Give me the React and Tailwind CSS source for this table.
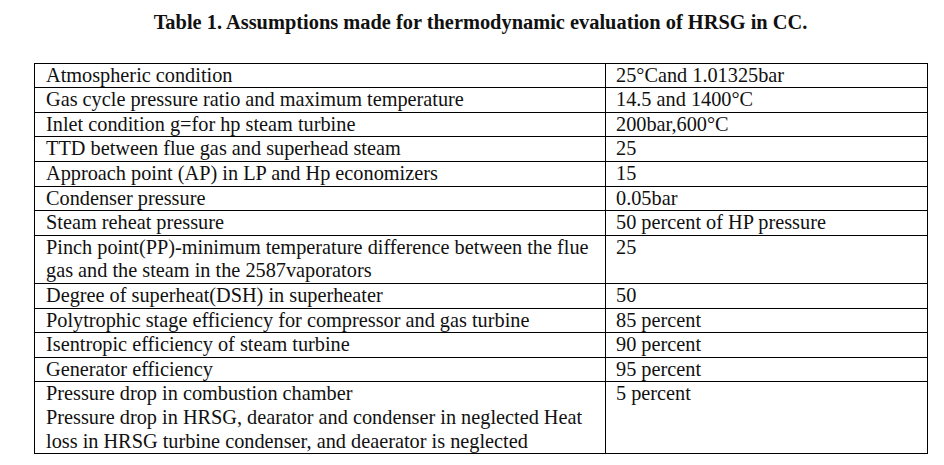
import React from 'react';

const rows = [
  [['Atmospheric condition'], '25°Cand 1.01325bar'],
  [['Gas cycle pressure ratio and maximum temperature'], '14.5 and 1400°C'],
  [['Inlet condition g=for hp steam turbine'], '200bar,600°C'],
  [['TTD between flue gas and superhead steam'], '25'],
  [['Approach point (AP) in LP and Hp economizers'], '15'],
  [['Condenser pressure'], '0.05bar'],
  [['Steam reheat pressure'], '50 percent of HP pressure'],
  [
    [
      'Pinch point(PP)-minimum temperature difference between the flue',
      'gas and the steam in the 2587vaporators',
    ],
    '25',
  ],
  [['Degree of superheat(DSH) in superheater'], '50'],
  [['Polytrophic stage efficiency for compressor and gas turbine'], '85 percent'],
  [['Isentropic efficiency of steam turbine'], '90 percent'],
  [['Generator efficiency'], '95 percent'],
  [
    [
      'Pressure drop in combustion chamber',
      'Pressure drop in HRSG, dearator and condenser in neglected Heat',
      'loss in HRSG turbine condenser, and deaerator is neglected',
    ],
    '5 percent',
  ],
];

export default function App() {
  return (
    <div className="min-h-[465px] bg-white pl-[34px] pt-[11px] text-[#111] [font-family:'Liberation_Serif','Times_New_Roman',serif]">
      <div className="w-[893px]">
        <h1 className="text-center text-[20.4px] font-bold leading-[23.6px]">
          Table 1. Assumptions made for thermodynamic evaluation of HRSG in CC.
        </h1>
        <table className="mt-[28px] w-[893px] table-fixed border-collapse text-[20.3px] leading-[23.6px]">
          <colgroup>
            <col className="w-[571px]" />
            <col className="w-[322px]" />
          </colgroup>
          <tbody>
            {rows.map(([left, right], i) => (
              <tr key={i}>
                <td className="border border-black py-0 pl-[11px] pr-1 align-top whitespace-nowrap">
                  {left.map((line, j) => (
                    <div key={j}>{line}</div>
                  ))}
                </td>
                <td className="border border-black py-0 pl-[10px] align-top whitespace-nowrap">
                  {right}
                </td>
              </tr>
            ))}
          </tbody>
        </table>
      </div>
    </div>
  );
}
